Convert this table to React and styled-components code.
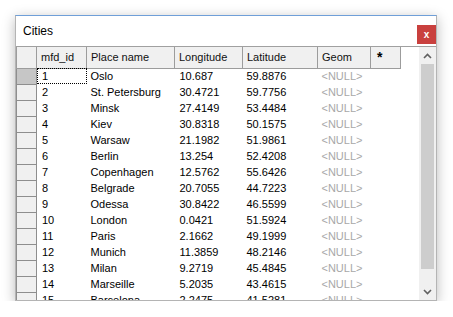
import React from 'react';
import styled, { createGlobalStyle } from 'styled-components';

const GlobalStyle = createGlobalStyle`
    body {
        margin: 0;
        background: #fff;
        font-family: "Liberation Sans", Arial, sans-serif;
    }
`

const Page = styled.div`
    padding: 15px 0 0 15px;
`

const Window = styled.div`
    width: 420px;
    height: 284px;
    background: #fff;
    border: 1px solid #b4b4b4;
    border-top-color: #6f9fd8;
    box-shadow: 0 3px 12px rgba(0, 0, 0, 0.28);
    display: flex;
    flex-direction: column;
    overflow: hidden;
`

const TitleBar = styled.div`
    height: 30px;
    display: flex;
    align-items: center;
    justify-content: space-between;
    padding-left: 7px;
    font-size: 12px;
    color: #000;
`

const CloseButton = styled.div`
    width: 19px;
    height: 19px;
    margin-top: 7px;
    background: #c9403e;
    color: #fff;
    font: bold 10px "Liberation Sans", Arial, sans-serif;
    display: flex;
    align-items: center;
    justify-content: center;
`

const GridArea = styled.div`
    flex: 1;
    display: flex;
    border-top: 1px solid #a0a0a0;
    min-height: 0;
`

const TableWrap = styled.div`
    flex: 1;
    overflow: hidden;
`

const Table = styled.table`
    border-collapse: collapse;
    table-layout: fixed;
    font-size: 11px;
`

const HeadCell = styled.th`
    width: ${({ w }) => w}px;
    height: 21px;
    padding: 0 0 0 ${({ pad }) => pad || 4}px;
    box-sizing: border-box;
    background: #f0f0f0;
    border-right: 1px solid #9c9c9c;
    border-bottom: 1px solid #9c9c9c;
    border-left: ${({ first }) => first ? '1px solid #9c9c9c' : 'none'};
    text-align: left;
    font-weight: normal;
    color: #111;
`

const Star = styled.span`
    font-size: 14px;
    font-weight: bold;
    color: #000;
`

const RowHead = styled.td`
    width: 20px;
    height: 16px;
    padding: 0;
    box-sizing: border-box;
    background: ${({ current }) => current ? '#c6c6c6' : '#f0f0f0'};
    border-left: 1px solid #8e8e8e;
    border-right: 1px solid #8e8e8e;
    border-bottom: 1px solid #8e8e8e;
`

const Cell = styled.td`
    height: 16px;
    padding: 0 0 0 ${({ pad }) => pad || 4}px;
    box-sizing: border-box;
    white-space: nowrap;
    overflow: hidden;
    color: ${({ nul }) => nul ? '#a8a8a8' : '#000'};
    outline: ${({ focus }) => focus ? '1px dotted #000' : 'none'};
    outline-offset: -1px;
`

const Scrollbar = styled.div`
    width: 17px;
    background: #f0f0f0;
    display: flex;
    flex-direction: column;
    align-items: center;
`

const Arrow = styled.div`
    height: 17px;
    width: 17px;
    display: flex;
    align-items: center;
    justify-content: center;
`

const Track = styled.div`
    flex: 1;
    width: 17px;
    display: flex;
    flex-direction: column;
`

const Thumb = styled.div`
    height: 205px;
    margin: 0 2px;
    background: #cdcdcd;
`

const cities = [
    ['1', 'Oslo', '10.687', '59.8876'],
    ['2', 'St. Petersburg', '30.4721', '59.7756'],
    ['3', 'Minsk', '27.4149', '53.4484'],
    ['4', 'Kiev', '30.8318', '50.1575'],
    ['5', 'Warsaw', '21.1982', '51.9861'],
    ['6', 'Berlin', '13.254', '52.4208'],
    ['7', 'Copenhagen', '12.5762', '55.6426'],
    ['8', 'Belgrade', '20.7055', '44.7223'],
    ['9', 'Odessa', '30.8422', '46.5599'],
    ['10', 'London', '0.0421', '51.5924'],
    ['11', 'Paris', '2.1662', '49.1999'],
    ['12', 'Munich', '11.3859', '48.2146'],
    ['13', 'Milan', '9.2719', '45.4845'],
    ['14', 'Marseille', '5.2035', '43.4615'],
    ['15', 'Barcelona', '2.2475', '41.5281']
];

const Chevron = ({ down }) => (
    <svg width="9" height="6" viewBox="0 0 9 6">
        <path
            d={down ? 'M1 1 L4.5 4.5 L8 1' : 'M1 5 L4.5 1.5 L8 5'}
            fill="none"
            stroke="#606060"
            strokeWidth="1.6"
        />
    </svg>
);

export default function App() {
    return (
        <Page>
            <GlobalStyle />
            <Window>
                <TitleBar>
                    <span>Cities</span>
                    <CloseButton>x</CloseButton>
                </TitleBar>
                <GridArea>
                    <TableWrap>
                        <Table>
                            <thead>
                                <tr>
                                    <HeadCell w={20} first />
                                    <HeadCell w={50}>mfd_id</HeadCell>
                                    <HeadCell w={88}>Place name</HeadCell>
                                    <HeadCell w={68}>Longitude</HeadCell>
                                    <HeadCell w={75}>Latitude</HeadCell>
                                    <HeadCell w={53}>Geom</HeadCell>
                                    <HeadCell w={30} pad={6}><Star>*</Star></HeadCell>
                                </tr>
                            </thead>
                            <tbody>
                                {cities.map(([id, name, lon, lat], i) => (
                                    <tr key={`row-${id}`}>
                                        <RowHead current={i === 0} />
                                        <Cell focus={i === 0} pad={5}>{id}</Cell>
                                        <Cell>{name}</Cell>
                                        <Cell pad={5}>{lon}</Cell>
                                        <Cell>{lat}</Cell>
                                        <Cell nul>{'<NULL>'}</Cell>
                                        <Cell />
                                    </tr>
                                ))}
                            </tbody>
                        </Table>
                    </TableWrap>
                    <Scrollbar>
                        <Arrow><Chevron /></Arrow>
                        <Track><Thumb /></Track>
                        <Arrow><Chevron down /></Arrow>
                    </Scrollbar>
                </GridArea>
            </Window>
        </Page>
    );
}
